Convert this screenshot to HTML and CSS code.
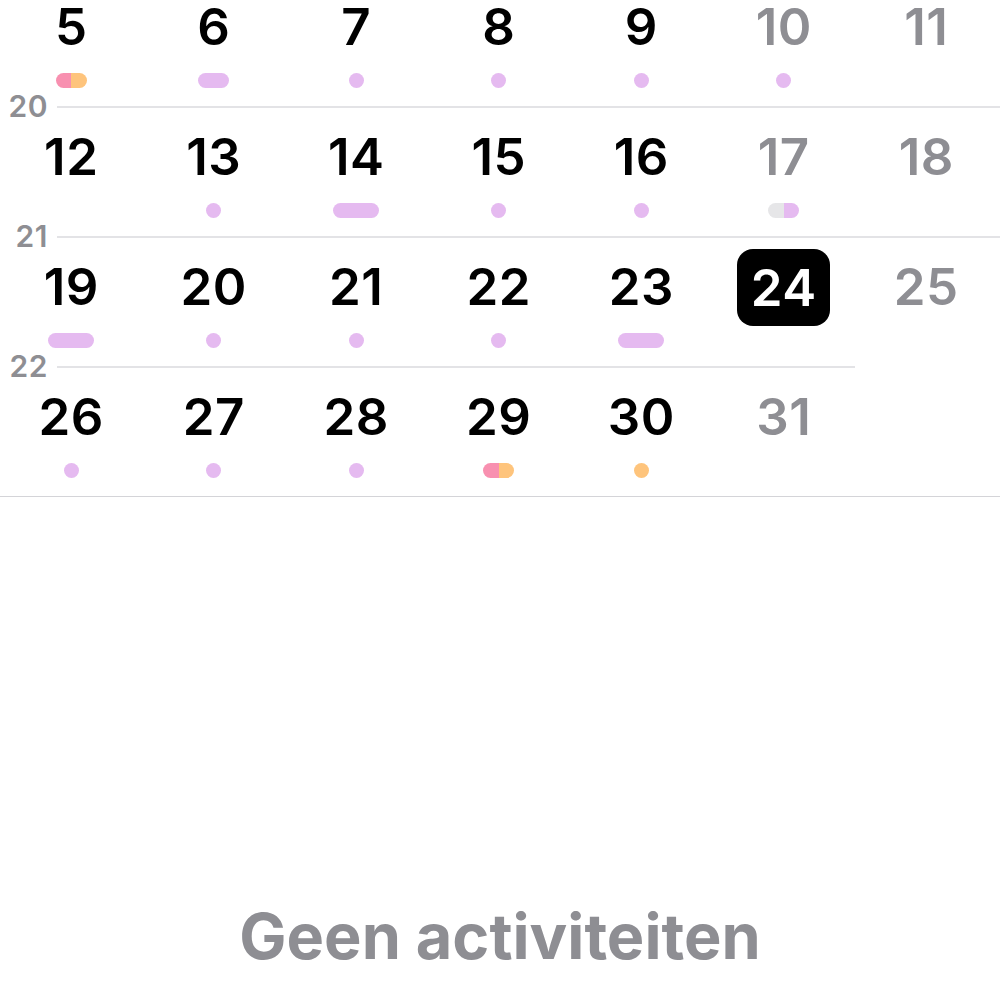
FILE: index.html
```html
<!DOCTYPE html>
<html lang="nl">
<head>
<meta charset="utf-8">
<title>Kalender</title>
<link rel="stylesheet" href="styles.css">
</head>
<body>
<div class="cal">
  <div class="week">
    <div class="wk-line"></div>
    <div class="days">
      <div class="day"><span class="num">5</span><span class="dots"><i class="pink"></i><i class="orange"></i></span></div>
      <div class="day"><span class="num">6</span><span class="dots"><i class="purple"></i><i class="purple"></i></span></div>
      <div class="day"><span class="num">7</span><span class="dots"><i class="purple"></i></span></div>
      <div class="day"><span class="num">8</span><span class="dots"><i class="purple"></i></span></div>
      <div class="day"><span class="num">9</span><span class="dots"><i class="purple"></i></span></div>
      <div class="day off"><span class="num">10</span><span class="dots"><i class="purple"></i></span></div>
      <div class="day off"><span class="num">11</span><span class="dots"></span></div>
    </div>
  </div>
  <div class="week">
    <div class="wk-line"></div>
    <span class="wk-num">20</span>
    <div class="days">
      <div class="day"><span class="num">12</span><span class="dots"></span></div>
      <div class="day"><span class="num">13</span><span class="dots"><i class="purple"></i></span></div>
      <div class="day"><span class="num">14</span><span class="dots"><i class="purple"></i><i class="purple"></i><i class="purple"></i></span></div>
      <div class="day"><span class="num">15</span><span class="dots"><i class="purple"></i></span></div>
      <div class="day"><span class="num">16</span><span class="dots"><i class="purple"></i></span></div>
      <div class="day off"><span class="num">17</span><span class="dots"><i class="gray"></i><i class="purple"></i></span></div>
      <div class="day off"><span class="num">18</span><span class="dots"></span></div>
    </div>
  </div>
  <div class="week">
    <div class="wk-line"></div>
    <span class="wk-num">21</span>
    <div class="days">
      <div class="day"><span class="num">19</span><span class="dots"><i class="purple"></i><i class="purple"></i><i class="purple"></i></span></div>
      <div class="day"><span class="num">20</span><span class="dots"><i class="purple"></i></span></div>
      <div class="day"><span class="num">21</span><span class="dots"><i class="purple"></i></span></div>
      <div class="day"><span class="num">22</span><span class="dots"><i class="purple"></i></span></div>
      <div class="day"><span class="num">23</span><span class="dots"><i class="purple"></i><i class="purple"></i><i class="purple"></i></span></div>
      <div class="day today"><span class="num">24</span><span class="dots"></span></div>
      <div class="day off"><span class="num">25</span><span class="dots"></span></div>
    </div>
  </div>
  <div class="week last">
    <div class="wk-line short"></div>
    <span class="wk-num">22</span>
    <div class="days">
      <div class="day"><span class="num">26</span><span class="dots"><i class="purple"></i></span></div>
      <div class="day"><span class="num">27</span><span class="dots"><i class="purple"></i></span></div>
      <div class="day"><span class="num">28</span><span class="dots"><i class="purple"></i></span></div>
      <div class="day"><span class="num">29</span><span class="dots"><i class="pink"></i><i class="orange"></i></span></div>
      <div class="day"><span class="num">30</span><span class="dots"><i class="orange"></i></span></div>
      <div class="day off"><span class="num">31</span><span class="dots"></span></div>
    </div>
  </div>
</div>
<div class="empty">Geen activiteiten</div>
</body>
</html>
```

FILE: styles.css
```css
html, body {
  margin: 0;
  padding: 0;
  background: #ffffff;
  width: 1000px;
  height: 1000px;
  overflow: hidden;
  font-family: Inter, "Noto Sans", "Liberation Sans", sans-serif;
}

.cal {
  margin-top: -24px;
  border-bottom: 1px solid #d4d4d8;
}

.week {
  position: relative;
  height: 130px;
}

.wk-line {
  height: 2px;
  margin-left: 57px;
  background: #e3e3e6;
}

.wk-line.short {
  width: 798px;
}

.wk-num {
  position: absolute;
  left: 0;
  top: -16px;
  width: 48px;
  text-align: right;
  font-size: 30px;
  line-height: 32px;
  font-weight: 600;
  color: #8e8e93;
  letter-spacing: 0.5px;
}

.days {
  display: grid;
  grid-template-columns: repeat(7, 142.5px);
}

.day {
  height: 128px;
  display: flex;
  flex-direction: column;
  align-items: center;
}

.num {
  margin-top: 22.5px;
  height: 52px;
  line-height: 52px;
  min-width: 93px;
  box-sizing: border-box;
  display: flex;
  align-items: center;
  justify-content: center;
  border-radius: 16px;
  font-size: 51px;
  font-weight: 600;
  color: #000000;
  letter-spacing: 0.5px;
}

.day.off .num {
  color: #8e8e93;
}

.day.today .num {
  background: #000000;
  color: #ffffff;
  margin-top: 11px;
  height: 77px;
  line-height: 75px;
}

.dots {
  margin-top: 20.5px;
  height: 15px;
  display: flex;
  border-radius: 8px;
  overflow: hidden;
}

.day.today .dots {
  margin-top: 7px;
}

.dots i {
  display: block;
  width: 15.3px;
  height: 15px;
}

.dots .pink { background: #f890b0; }
.dots .orange { background: #fec47c; }
.dots .purple { background: #e5baf0; }
.dots .gray { background: #e6e6e8; }

.empty {
  margin-top: 399px;
  text-align: center;
  font-size: 63px;
  line-height: 80px;
  font-weight: 700;
  color: #8e8e93;
}
```
